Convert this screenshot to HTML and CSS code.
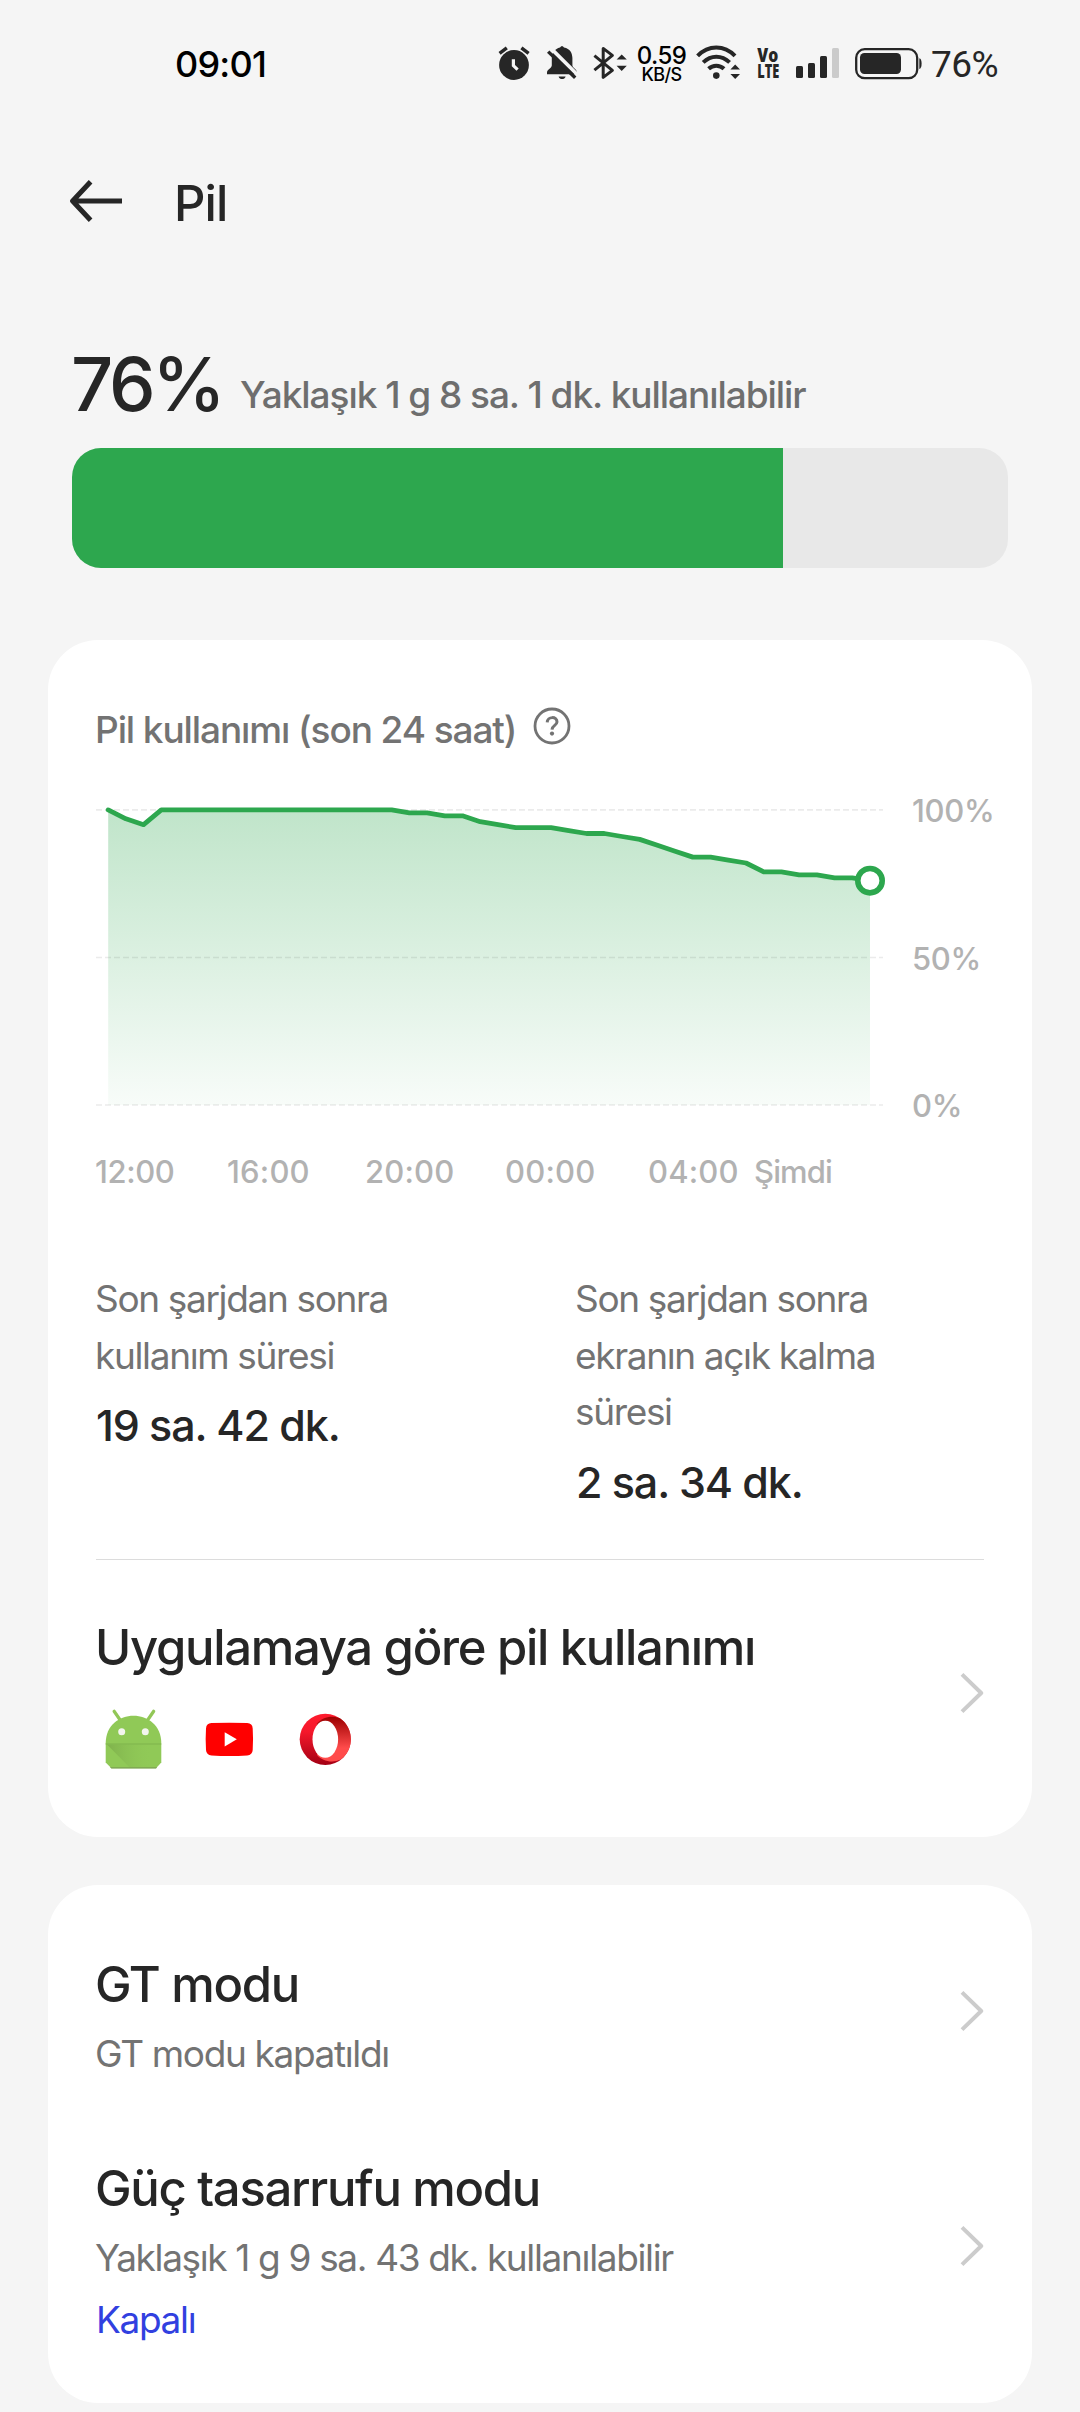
FILE: index.html
```html
<!DOCTYPE html>
<html lang="tr">
<head>
    <meta charset="UTF-8">
    <meta name="viewport" content="width=device-width, initial-scale=1.0">
    <title>Pil</title>
    <link rel="stylesheet" href="styles.css">
</head>
<body>

    <div class="status-bar">
        <span class="clock">09:01</span>
        <svg class="alarm" width="32" height="36" viewBox="0 0 32 36">
            <circle cx="16" cy="20" r="14.9" fill="#262626"/>
            <path d="M1.6 8.4L8.8 2.8M30.6 8.4L23.4 2.8" stroke="#262626" stroke-width="3.4" fill="none"/>
            <path d="M15.4 14.2V20.6L19.6 24.6" stroke="#f4f4f4" stroke-width="3.2" fill="none"/>
        </svg>
        <svg class="bell" width="32" height="36" viewBox="0 0 32 36">
            <path d="M14 2.6Q16 -0.4 18 2.6C24 3.6 26.4 8.4 26.4 13V20.6C26.8 23.4 31 24 31 28V29.3H1V27.6C1 24 5.4 23.6 5.8 20.4V13.4C5.8 8 9 3.8 14 2.6Z" fill="#262626"/>
            <path d="M12.6 31.4H19.6C18.6 35 13.6 35 12.6 31.4Z" fill="#262626"/>
            <path d="M5 3.4L32 30.2" stroke="#f5f5f5" stroke-width="3.6"/>
            <path d="M2.2 6.6L29.2 32.8" stroke="#262626" stroke-width="3.4"/>
        </svg>
        <svg class="bluetooth" width="34" height="36" viewBox="0 0 34 36">
            <path d="M1.4 10.6L19.4 25.4L10.2 32.4V3.4L19.4 10.4L1.4 25.2" stroke="#262626" stroke-width="3" fill="none" stroke-linejoin="round"/>
            <path d="M28.7 9.4L33.8 14.6H23.6ZM28.7 26L33.8 20.8H23.6Z" fill="#262626"/>
        </svg>
        <div class="net-speed">
            <span class="net-value">0.59</span>
            <span class="net-unit">KB/S</span>
        </div>
        <svg class="wifi" width="44" height="36" viewBox="0 0 44 36">
            <g stroke="#262626" stroke-width="4" fill="none">
                <path d="M1.6 10.8C12.4 -0.4 28.2 -0.4 39 10.8"/>
                <path d="M7.2 17.4C15 9.8 25.6 9.8 33.6 17.4"/>
                <path d="M12.6 23.8C17 19.6 23.6 19.6 28 23.8"/>
            </g>
            <circle cx="20.3" cy="30.6" r="3.3" fill="#262626"/>
            <path d="M39.2 19.4L44 24.4H34.4ZM39.2 34L44 29H34.4Z" fill="#262626"/>
        </svg>
        <svg class="volte" width="24" height="36" viewBox="0 0 24 36">
            <text x="0.2" y="16.8" textLength="21" lengthAdjust="spacingAndGlyphs">Vo</text>
            <text x="0.2" y="33" textLength="22" lengthAdjust="spacingAndGlyphs">LTE</text>
        </svg>
        <svg class="signal" width="43" height="36" viewBox="0 0 43 36">
            <rect x="0" y="21" width="7" height="12" rx="1.5" fill="#262626"/>
            <rect x="12" y="18" width="7" height="15" rx="1.5" fill="#262626"/>
            <rect x="24" y="11" width="7" height="22" rx="1.5" fill="#262626"/>
            <rect x="36" y="3" width="7" height="30" rx="1.5" fill="#cbcbcb"/>
        </svg>
        <svg class="battery" width="67" height="36" viewBox="0 0 67 36">
            <rect x="1.2" y="4.2" width="61" height="29" rx="8.5" fill="none" stroke="#262626" stroke-width="2.3"/>
            <rect x="5" y="8" width="41" height="21" rx="4.5" fill="#262626"/>
            <path d="M64.3 13.2Q66.6 13.6 66.6 18.6T64.3 24Z" fill="#262626"/>
        </svg>
        <span class="level">76%</span>
    </div>

    <header class="header">
        <svg width="53" height="42" viewBox="0 0 53 42">
            <path d="M52 21H4M20.6 1.8L2.6 21L20.6 40.2" stroke="#262626" stroke-width="5" fill="none" stroke-linejoin="round"/>
        </svg>
        <h1>Pil</h1>
    </header>

    <section class="summary">
        <div class="summary-text">
            <span class="percent">76%</span>
            <span class="remaining">Yaklaşık 1 g 8 sa. 1 dk. kullanılabilir</span>
        </div>
        <div class="bar">
            <div class="bar-fill" style="width: 76%"></div>
        </div>
    </section>

    <section class="card">
        <div class="card-title">
            <h2>Pil kullanımı (son 24 saat)</h2>
            <svg width="38" height="38" viewBox="0 0 38 38">
                <circle cx="19" cy="19" r="17" fill="none" stroke="#737373" stroke-width="2.8"/>
                <path d="M14.2 15.4C14.4 9 24.2 9.2 24 15C23.8 18.6 19.2 18.2 19 22.6" fill="none" stroke="#737373" stroke-width="3"/>
                <circle cx="19" cy="26.6" r="2.1" fill="#737373"/>
            </svg>
        </div>

        <div class="chart">
            <svg class="plot" width="800" height="335" viewBox="0 0 800 335">
                <defs>
                    <linearGradient id="areaFill" x1="0" y1="18.8" x2="0" y2="314" gradientUnits="userSpaceOnUse">
                        <stop offset="0" stop-color="#2da74e" stop-opacity="0.3"/>
                        <stop offset="1" stop-color="#2da74e" stop-opacity="0.035"/>
                    </linearGradient>
                </defs>
                <path id="area" fill="url(#areaFill)"/>
                <path class="grid-line" d="M0 18.9H787M0 166.5H787M0 314H787"/>
                <path id="line" class="level-line"/>
                <circle id="now" class="now-dot" r="12.2"/>
            </svg>
            <div class="y-axis">
                <span>100%</span>
                <span>50%</span>
                <span>0%</span>
            </div>
        </div>
        <div class="x-axis">
            <span class="first">12:00</span>
            <span>16:00</span>
            <span>20:00</span>
            <span>00:00</span>
            <span>04:00</span>
            <span class="now">Şimdi</span>
        </div>

        <div class="stats">
            <div>
                <p class="stat-label">Son şarjdan sonra kullanım süresi</p>
                <p class="stat-value">19 sa. 42 dk.</p>
            </div>
            <div>
                <p class="stat-label">Son şarjdan sonra ekranın açık kalma süresi</p>
                <p class="stat-value">2 sa. 34 dk.</p>
            </div>
        </div>

        <div class="row apps">
            <div>
                <h3>Uygulamaya göre pil kullanımı</h3>
                <div class="app-icons">
                    <svg width="76" height="62" viewBox="0 0 76 62">
                        <defs>
                            <linearGradient id="droidShade" x1="0" y1="0" x2="1" y2="0">
                                <stop offset="0" stop-color="#7fb14c"/>
                                <stop offset="1" stop-color="#90c957" stop-opacity="0"/>
                            </linearGradient>
                        </defs>
                        <path d="M18.2 3.4L24.4 12.4M57.6 3.4L51.4 12.4" stroke="#92c757" stroke-width="3.4" stroke-linecap="round"/>
                        <path d="M9.7 35.3C9.7 -1.6 65.3 -1.6 65.3 35.3V54.6L60 60.3H15.4L9.7 54.6Z" fill="#90c957"/>
                        <path d="M11 36.6H56V59.3H33.4Z" fill="url(#droidShade)"/>
                        <path d="M9.7 35.4H65.3V36.6H9.7Z" fill="#7fb44c"/>
                        <path d="M13.8 59.3H61.2L60 60.6H15.4Z" fill="#7ba052"/>
                        <circle cx="25.7" cy="23.7" r="3.5" fill="#f3f5ee"/>
                        <circle cx="49.3" cy="23.7" r="3.5" fill="#f3f5ee"/>
                    </svg>
                    <svg width="76" height="62" viewBox="0 0 76 62">
                        <path d="M19.5 15.1Q37.3 14.2 55.2 15.1Q60.4 15.4 60.7 20.4Q61.4 31.2 60.7 42Q60.4 47 55.2 47.4Q37.3 48.4 19.5 47.4Q14.3 47 14 42Q13.3 31.2 14 20.4Q14.3 15.4 19.5 15.1Z" fill="#f00"/>
                        <path d="M32.7 24.2L44.8 31.3L32.7 38.4Z" fill="#fff"/>
                    </svg>
                    <svg width="76" height="62" viewBox="0 0 76 62">
                        <defs>
                            <linearGradient id="operaRing" x1="0" y1="0" x2="0" y2="1">
                                <stop offset="0" stop-color="#ff1b2d"/>
                                <stop offset="0.35" stop-color="#f5182b"/>
                                <stop offset="1" stop-color="#a40014"/>
                            </linearGradient>
                            <linearGradient id="operaInner" x1="0" y1="0" x2="0" y2="1">
                                <stop offset="0" stop-color="#9c0000"/>
                                <stop offset="0.7" stop-color="#ff4b4b"/>
                                <stop offset="1" stop-color="#ff4b4b"/>
                            </linearGradient>
                        </defs>
                        <circle cx="37.3" cy="31.3" r="25.6" fill="url(#operaRing)"/>
                        <path d="M29 15.6C34 9.6 44 6.6 52.4 10.6C66 20 66.4 42 52.8 51.6C44 55.6 34 53 29 47Z" fill="url(#operaInner)"/>
                        <ellipse cx="37.3" cy="31.3" rx="12.8" ry="18.5" fill="#fff"/>
                    </svg>
                </div>
            </div>
            <svg class="chevron" width="26" height="42" viewBox="0 0 26 42">
                <path d="M4 2.4L23.2 21L4 39.6"/>
            </svg>
        </div>
    </section>

    <section class="card modes">
        <div class="row">
            <div>
                <h3>GT modu</h3>
                <p class="hint">GT modu kapatıldı</p>
            </div>
            <svg class="chevron" width="26" height="42" viewBox="0 0 26 42">
                <path d="M4 2.4L23.2 21L4 39.6"/>
            </svg>
        </div>
        <div class="row">
            <div>
                <h3>Güç tasarrufu modu</h3>
                <p class="hint">Yaklaşık 1 g 9 sa. 43 dk. kullanılabilir</p>
                <p class="state">Kapalı</p>
            </div>
            <svg class="chevron" width="26" height="42" viewBox="0 0 26 42">
                <path d="M4 2.4L23.2 21L4 39.6"/>
            </svg>
        </div>
    </section>

    <script>
        // battery level, one sample per step, 12:00 -> now
        const levels = [
            100, 97, 95, 100, 100, 100, 100, 100, 100, 100, 100, 100, 100, 100, 100, 100, 100,
            99, 99, 98, 98, 96, 95, 94, 94, 94, 93, 92, 92, 91, 90, 88, 86, 84, 84, 83, 82,
            79, 79, 78, 78, 77, 77, 76
        ];
        const left = 12.2;
        const right = 774;
        const top100 = 18.9;
        const bottom = 314;
        const step = (right - left) / (levels.length - 1);

        const points = levels.map((v, i) => {
            const x = left + i * step;
            const y = top100 + (100 - v) / 100 * (bottom - top100);
            return x.toFixed(1) + ' ' + y.toFixed(1);
        });
        const linePath = 'M' + points.join('L');
        const last = points[points.length - 1].split(' ');

        document.getElementById('line').setAttribute('d', linePath);
        document.getElementById('area').setAttribute('d', linePath + 'V' + bottom + 'H' + left + 'Z');
        document.getElementById('now').setAttribute('cx', last[0]);
        document.getElementById('now').setAttribute('cy', last[1]);
    </script>
</body>
</html>
```
FILE: styles.css
```css
* {
    box-sizing: border-box;
}

body {
    margin: 0;
    background: #f5f5f5;
    font-family: 'Inter', 'Roboto', sans-serif;
    color: #262626;
}

h1, h2, h3, p {
    margin: 0;
}

svg {
    display: block;
    flex: none;
}

/* status bar */
.status-bar {
    display: flex;
    align-items: center;
    height: 126px;
    padding-left: 175px;
    white-space: nowrap;
}

.clock {
    width: 323px;
    padding-top: 2px;
    font-size: 36px;
    font-weight: 500;
    letter-spacing: -0.77px;
    color: #000;
}

.bell {
    margin-left: 16px;
}

.bluetooth {
    margin-left: 15px;
}

.net-speed {
    display: flex;
    flex-direction: column;
    align-items: center;
    width: 69px;
    padding-top: 2px;
    color: #000;
    font-weight: 500;
}

.net-value {
    font-size: 24px;
    line-height: 21px;
    letter-spacing: -0.6px;
}

.net-unit {
    font-size: 18px;
    line-height: 17px;
    letter-spacing: -0.6px;
}

.volte {
    margin-left: 17px;
    font-family: 'Open Sans', sans-serif;
    font-size: 19px;
    font-weight: 800;
    fill: #262626;
}

.signal {
    margin-left: 15px;
}

.battery {
    margin-left: 16px;
}

.level {
    margin-left: 9px;
    padding-top: 2px;
    font-family: 'Roboto', sans-serif;
    font-size: 37px;
    letter-spacing: -0.5px;
}

/* header */
.header {
    display: flex;
    align-items: center;
    height: 150px;
    padding-left: 70px;
}

.header h1 {
    margin-left: 51px;
    padding-top: 4px;
    font-size: 49px;
    font-weight: 500;
    letter-spacing: -0.9px;
}

/* charge level */
.summary {
    padding: 71px 72px 0 71px;
}

.summary-text {
    display: flex;
    align-items: flex-end;
    white-space: nowrap;
}

.percent {
    width: 169px;
    margin-bottom: 2px;
    font-size: 74px;
    line-height: 74px;
    font-weight: 500;
    letter-spacing: -3.2px;
}

.remaining {
    font-size: 37px;
    line-height: 56px;
    font-weight: 500;
    letter-spacing: -1.05px;
    color: #6e6e6e;
}

.bar {
    height: 120px;
    margin: 25px 0 0 1px;
    border-radius: 29px;
    background: #e8e8e8;
    overflow: hidden;
}

.bar-fill {
    height: 100%;
    background: #2da74e;
}

/* cards */
.card {
    margin: 72px 48px 0;
    padding: 64px 48px 67px;
    background: #fff;
    border-radius: 50px;
}

.card-title {
    display: flex;
    align-items: center;
    height: 51px;
}

.card-title h2 {
    margin-left: -1px;
    font-size: 37px;
    font-weight: 500;
    letter-spacing: -1.1px;
    color: #737373;
}

.card-title svg {
    margin: 0 0 7px 17px;
}

/* chart */
.chart {
    display: flex;
    height: 335px;
    margin-top: 36px;
}

.grid-line {
    stroke: #000;
    stroke-opacity: 0.08;
    stroke-width: 1.6;
    stroke-dasharray: 6 3;
}

.level-line {
    fill: none;
    stroke: #2da74e;
    stroke-width: 4.8;
    stroke-linecap: round;
    stroke-linejoin: round;
}

.now-dot {
    fill: #fff;
    stroke: #2da74e;
    stroke-width: 5.6;
}

.y-axis {
    display: flex;
    flex-direction: column;
    justify-content: space-between;
    margin-left: 16px;
    font-size: 31px;
    line-height: 40px;
    font-weight: 500;
    letter-spacing: -0.3px;
    color: #b2b2b2;
}

.x-axis {
    display: grid;
    grid-template-columns: 132px 138px 140px 143px 106px auto;
    margin: 26px 0 0 -1px;
    font-size: 31px;
    line-height: 40px;
    font-weight: 500;
    letter-spacing: 0.2px;
    color: #b2b2b2;
}

.x-axis .first {
    letter-spacing: -0.4px;
}

.x-axis .now {
    letter-spacing: -0.9px;
}

/* usage since last charge */
.stats {
    display: grid;
    grid-template-columns: 480px auto;
    margin-top: 79px;
    padding-bottom: 49.5px;
    border-bottom: 1px solid #dcdcdc;
}

.stat-label {
    max-width: 360px;
    margin-left: -1px;
    font-size: 37px;
    line-height: 56.5px;
    letter-spacing: -1.35px;
    color: #737373;
}

.stat-value {
    margin-top: 13px;
    font-size: 43px;
    line-height: 56px;
    font-weight: 500;
    letter-spacing: -1.1px;
}

/* list rows */
.row {
    display: flex;
    justify-content: space-between;
    align-items: center;
}

.row h3 {
    margin-left: -1px;
    font-size: 49px;
    line-height: 64px;
    font-weight: 500;
    letter-spacing: -1.3px;
}

.apps {
    padding-top: 56px;
}

.app-icons {
    display: flex;
    gap: 20px;
    margin-top: 28px;
}

.chevron path {
    fill: none;
    stroke: #ccc;
    stroke-width: 4;
    stroke-linejoin: round;
}

.apps .chevron {
    margin-bottom: 1px;
}

.modes {
    margin-top: 48px;
    padding: 68px 48px 55px;
}

.modes .row + .row {
    margin-top: 75px;
}

.modes .chevron {
    margin-bottom: 13px;
}

.hint {
    margin: 9px 0 0 -1px;
    font-size: 37px;
    line-height: 56px;
    letter-spacing: -1.35px;
    color: #737373;
}

.state {
    margin-top: 6px;
    font-size: 37px;
    line-height: 56px;
    letter-spacing: -1.35px;
    color: #3140e0;
}
```
